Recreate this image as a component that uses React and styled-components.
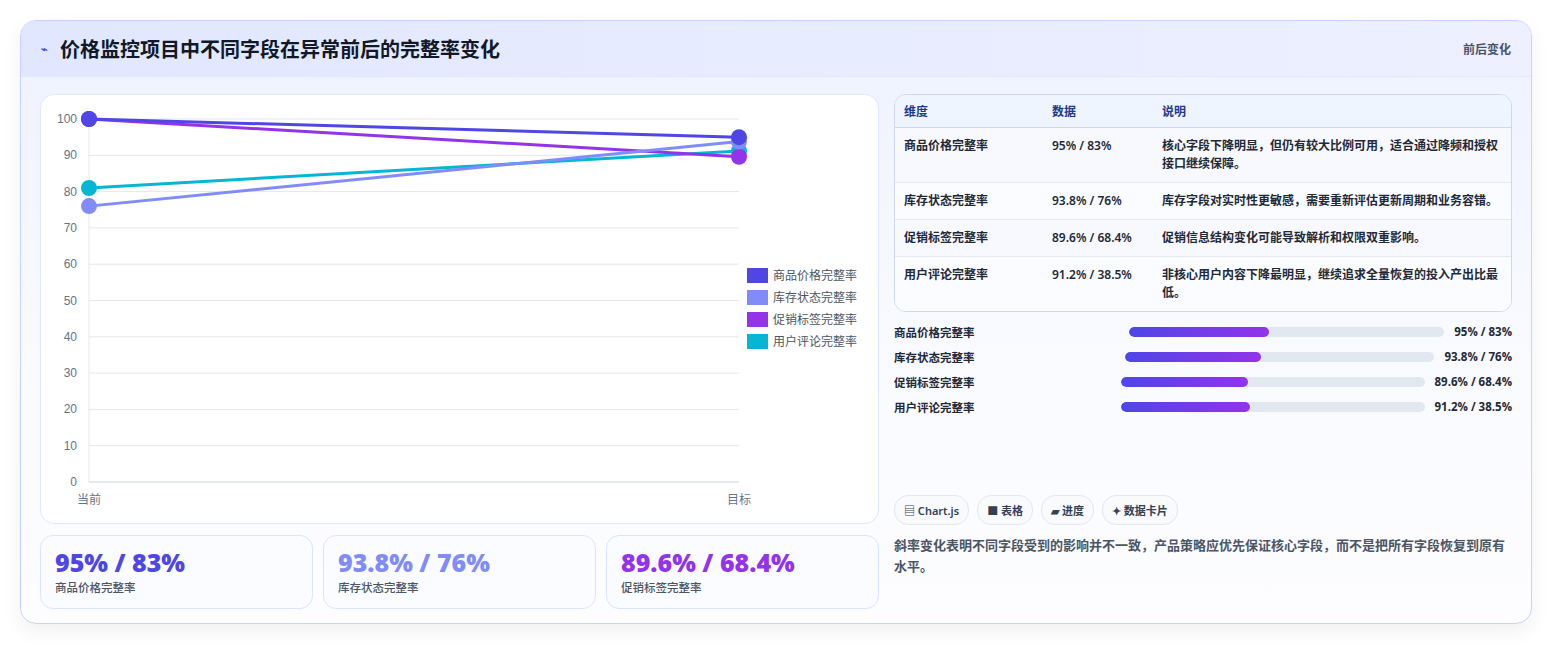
import React from "react";
import styled, { createGlobalStyle } from "styled-components";

const Global = createGlobalStyle`
  body { margin: 0; background: #f3f4f6; font-family: "Noto Sans", "Noto Sans CJK SC", sans-serif; }
`;
const Page = styled.div`padding: 20px 20px 22px 20px; background: #fff; height: 606px;`;
const Card = styled.div`
  border: 1px solid #c7d2fe; border-radius: 16px; overflow: hidden;
  background: linear-gradient(180deg, #eef2ff 0%, #fafbff 60%, #fdfdff 100%);
  box-shadow: 0 8px 20px rgba(0,0,0,0.06); height: 604px; box-sizing: border-box;
`;
const Header = styled.div`
  height: 55px; display: flex; align-items: center; justify-content: space-between;
  padding: 0 20px; background: linear-gradient(90deg, #e0e7ff, #eef0ff);
  border-bottom: 1px solid #e0e7ff;
`;
const Title = styled.h1`
  margin: 0; font-size: 20px; font-weight: 700; color: #111827; display: flex; align-items: center; gap: 12px;
`;
const Icon = styled.span`color: #4f46e5; font-size: 11px;`;
const HeadTag = styled.span`font-size: 12px; font-weight: 700; color: #475569;`;
const Body = styled.div`display: flex; gap: 15px; padding: 17px 19px 0 19px;`;
const Left = styled.div`width: 839px; display: flex; flex-direction: column; gap: 11px;`;
const ChartCard = styled.div`
  height: 430px; background: #fff; border: 1px solid #e0e7ff; border-radius: 14px; box-sizing: border-box;
`;
const Stats = styled.div`display: grid; grid-template-columns: repeat(3, 1fr); gap: 10px;`;
const Stat = styled.div`
  height: 74px; border: 1px solid #dbe4fe; border-radius: 13px; background: #fafcff;
  padding: 11px 14px; box-sizing: border-box;
`;
const StatVal = styled.div`font-size: 25px; font-weight: 800; color: ${p => p.c}; line-height: 30px; font-family: "Open Sans", "Noto Sans CJK SC", sans-serif;`;
const StatLbl = styled.div`font-size: 11.5px; color: #4b5563; margin-top: 2px; font-weight: 500;`;
const Right = styled.div`width: 620px; display: flex; flex-direction: column;`;
const Table = styled.table`
  width: 100%; border-collapse: separate; border-spacing: 0; border: 1px solid #cfd8ea; border-radius: 12px; overflow: hidden;
  font-size: 12px; font-weight: 600; color: #1f2937;
  th { text-align: left; color: #1e3a8a; background: #eff5ff; height: 32px; padding: 0 9px; border-bottom: 1px solid #cfd8ea; font-weight: 700; }
  td { padding: 9px 9px; line-height: 18px; border-bottom: 1px solid #e5e9f2; vertical-align: top; background: #f7f9fe; }
  tr:nth-child(even) td { background: #fbfcff; }
  tr:last-child td { border-bottom: none; }
`;
const Bars = styled.div`display: flex; flex-direction: column; gap: 8px; margin-top: 11px;`;
const BarRow = styled.div`display: flex; align-items: center; gap: 10px; font-size: 11.5px; font-weight: 600; color: #1f2937; height: 17px;`;
const BarLbl = styled.div`flex: 1 1 0;`;
const Track = styled.div`flex: 1.4 1 0; height: 10px; border-radius: 5px; background: #e2e8f0; overflow: hidden;`;
const Fill = styled.div`height: 100%; border-radius: 5px; background: linear-gradient(90deg, #4f46e5, #9333ea);`;
const BarVal = styled.div`font-weight: 700; font-family: "Open Sans", sans-serif;`;
const Spacer = styled.div`flex: 1;`;
const Chips = styled.div`display: flex; gap: 8px;`;
const Chip = styled.span`
  height: 28px; padding: 0 9px; border: 1px solid #e2e8f0; border-radius: 14px; background: #f8fafc;
  display: inline-flex; align-items: center; gap: 3px; font-size: 11px; font-weight: 600; color: #334155;
`;
const Note = styled.p`margin: 10px 0 0; font-size: 13px; line-height: 21px; font-weight: 600; color: #4b5563;`;
const Bottom = styled.div`height: 32px;`;

const series = [
  { n: "商品价格完整率", c: "#4f46e5", a: 100, b: 95 },
  { n: "库存状态完整率", c: "#818cf8", a: 76, b: 93.8 },
  { n: "促销标签完整率", c: "#9333ea", a: 100, b: 89.6 },
  { n: "用户评论完整率", c: "#06b6d4", a: 81, b: 91.2 },
];
const y = v => 387 - v * 3.63;

function Chart() {
  return (
    <svg width="838" height="428" viewBox="0 0 838 428" fontFamily="Liberation Sans, Noto Sans CJK SC, sans-serif">
      {Array.from({ length: 11 }, (_, i) => i * 10).map(v => (
        <g key={v}>
          <line x1="48" x2="698" y1={y(v)} y2={y(v)} stroke={v === 0 ? "#cbd5e1" : "#e5e7eb"} />
          <text x="36" y={y(v) + 4} textAnchor="end" fontSize="12" fill="#64748b">{v}</text>
        </g>
      ))}
      <line x1="48" x2="48" y1="24" y2="387" stroke="#e5e7eb" />
      <text x="48" y="409" textAnchor="middle" fontSize="12" fill="#64748b">当前</text>
      <text x="698" y="409" textAnchor="middle" fontSize="12" fill="#64748b">目标</text>
      {[...series].reverse().map(s => (
        <g key={s.n}>
          <line x1="48" y1={y(s.a)} x2="698" y2={y(s.b)} stroke={s.c} strokeWidth="3" />
          <circle cx="48" cy={y(s.a)} r="8" fill={s.c} />
          <circle cx="698" cy={y(s.b)} r="8" fill={s.c} />
        </g>
      ))}
      {series.map((s, i) => (
        <g key={s.n + "l"}>
          <rect x="706" y={173 + i * 22} width="21" height="15" fill={s.c} />
          <text x="732" y={185 + i * 22} fontSize="12" fill="#4b5563">{s.n}</text>
        </g>
      ))}
    </svg>
  );
}

const rows = [
  ["商品价格完整率", "95% / 83%", "核心字段下降明显，但仍有较大比例可用，适合通过降频和授权接口继续保障。"],
  ["库存状态完整率", "93.8% / 76%", "库存字段对实时性更敏感，需要重新评估更新周期和业务容错。"],
  ["促销标签完整率", "89.6% / 68.4%", "促销信息结构变化可能导致解析和权限双重影响。"],
  ["用户评论完整率", "91.2% / 38.5%", "非核心用户内容下降最明显，继续追求全量恢复的投入产出比最低。"],
];
const fills = [44.5, 44, 42, 42.5];

export default function App() {
  return (
    <Page>
      <Global />
      <Card>
        <Header>
          <Title><Icon>⌁</Icon>价格监控项目中不同字段在异常前后的完整率变化</Title>
          <HeadTag>前后变化</HeadTag>
        </Header>
        <Body>
          <Left>
            <ChartCard><Chart /></ChartCard>
            <Stats>
              <Stat><StatVal c="#4f46e5">95% / 83%</StatVal><StatLbl>商品价格完整率</StatLbl></Stat>
              <Stat><StatVal c="#818cf8">93.8% / 76%</StatVal><StatLbl>库存状态完整率</StatLbl></Stat>
              <Stat><StatVal c="#9333ea">89.6% / 68.4%</StatVal><StatLbl>促销标签完整率</StatLbl></Stat>
            </Stats>
          </Left>
          <Right>
            <Table>
              <thead><tr><th style={{ width: 130 }}>维度</th><th style={{ width: 92 }}>数据</th><th>说明</th></tr></thead>
              <tbody>
                {rows.map(r => <tr key={r[0]}><td>{r[0]}</td><td>{r[1]}</td><td>{r[2]}</td></tr>)}
              </tbody>
            </Table>
            <Bars>
              {rows.map((r, i) => (
                <BarRow key={r[0]}>
                  <BarLbl>{r[0]}</BarLbl>
                  <Track><Fill style={{ width: fills[i] + "%" }} /></Track>
                  <BarVal>{r[1]}</BarVal>
                </BarRow>
              ))}
            </Bars>
            <Spacer />
            <Chips>
              <Chip>▤ Chart.js</Chip><Chip>■ 表格</Chip><Chip>▰ 进度</Chip><Chip>✦ 数据卡片</Chip>
            </Chips>
            <Note>斜率变化表明不同字段受到的影响并不一致，产品策略应优先保证核心字段，而不是把所有字段恢复到原有水平。</Note>
            <Bottom />
          </Right>
        </Body>
      </Card>
    </Page>
  );
}
